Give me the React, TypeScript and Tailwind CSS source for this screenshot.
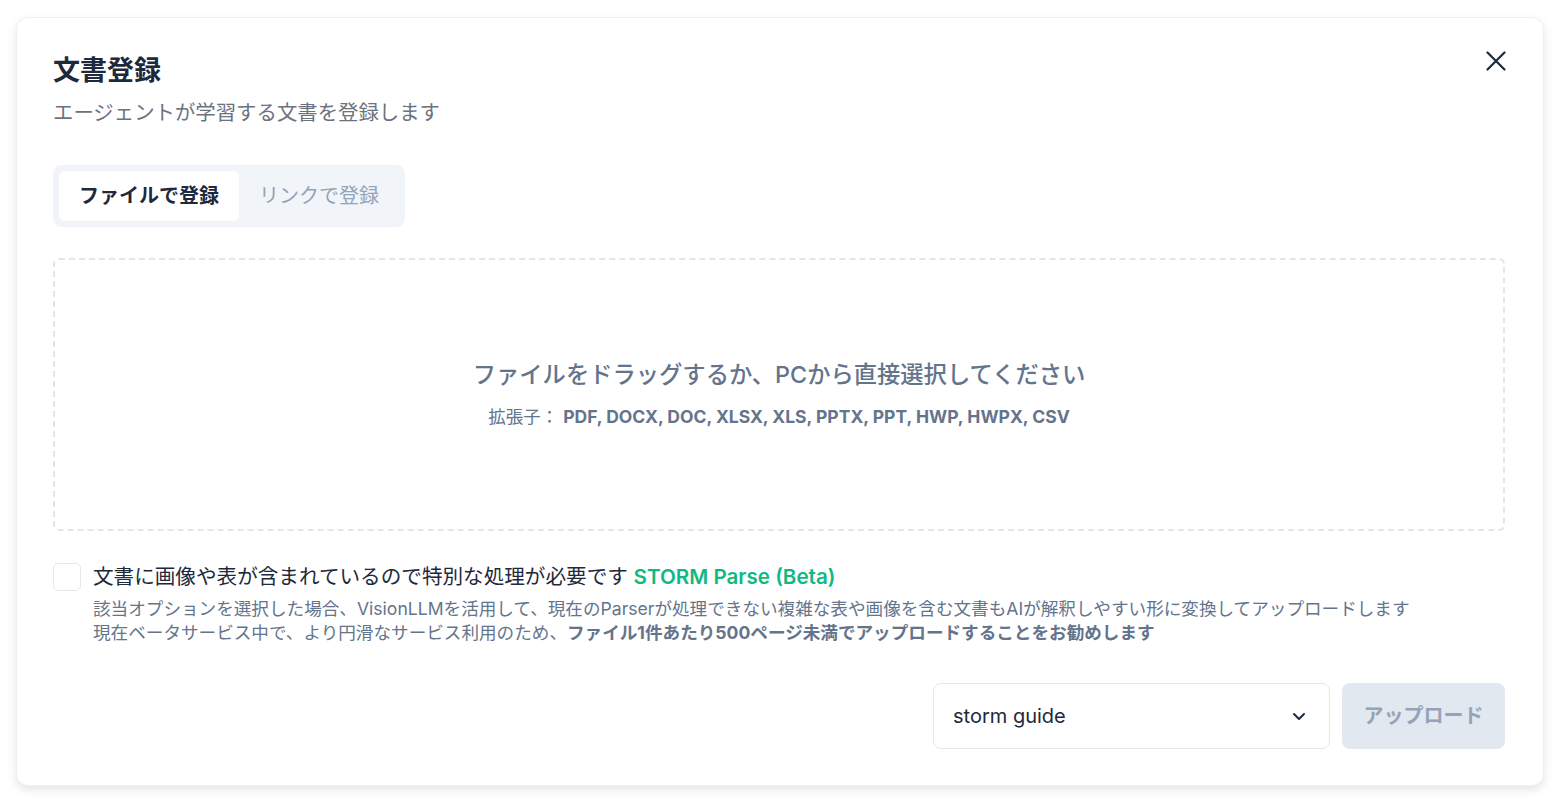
import React from "react";

const font = { fontFamily: "Inter, 'Noto Sans CJK JP', 'Noto Sans', sans-serif" };

export default function App() {
  return (
    <div className="w-[1554px] h-[804px] bg-white pt-[17px] pl-[16px]" style={font}>
      <div className="relative w-[1528px] h-[769px] bg-white rounded-[12px] border border-[#eef0f3] shadow-[0_4px_10px_rgba(0,0,0,0.10)] pl-[36px] pr-[38px] pt-[35px] flex flex-col">
        <button className="absolute right-[37px] top-[32px] w-[21px] h-[21px] flex items-center justify-center text-[#1e293b]">
          <svg width="20" height="20" viewBox="0 0 20 20" fill="none" stroke="currentColor" strokeWidth="2.2" strokeLinecap="round">
            <path d="M1.5 1.5L18.5 18.5M18.5 1.5L1.5 18.5" />
          </svg>
        </button>
        <h1 className="text-[27px] leading-[36px] font-bold text-[#1e293b]">文書登録</h1>
        <p className="mt-[10px] text-[20.4px] leading-[28px] text-[#6b7280]">エージェントが学習する文書を登録します</p>

        <div className="mt-[38px] self-start flex p-[6px] bg-[#f1f5f9] rounded-[8px] h-[62px]">
          <div className="px-[20px] h-[50px] flex items-center bg-white rounded-[6px] text-[20px] font-bold text-[#1e293b]">ファイルで登録</div>
          <div className="px-[20px] h-[50px] flex items-center text-[20px] text-[#94a3b8]">リンクで登録</div>
        </div>

        <div className="mt-[31px] h-[273px] border-2 border-dashed border-[#e2e5f0] rounded-[6px] flex flex-col items-center justify-center">
          <div className="text-[23.3px] leading-[32px] font-medium text-[#64748b]">ファイルをドラッグするか、PCから直接選択してください</div>
          <div className="mt-[13px] text-[17.5px] leading-[26px] text-[#64748b]">
            拡張子： <span className="font-bold">PDF, DOCX, DOC, XLSX, XLS, PPTX, PPT, HWP, HWPX, CSV</span>
          </div>
        </div>

        <div className="mt-[32px] flex items-start">
          <div className="w-[28px] h-[28px] border border-[#e5e7eb] rounded-[5px] bg-white shrink-0" />
          <div className="ml-[12px]">
            <div className="text-[20.6px] leading-[28px] text-[#1e293b]">
              文書に画像や表が含まれているので特別な処理が必要です <span className="font-semibold text-[#10b981]">STORM Parse (Beta)</span>
            </div>
            <div className="mt-[6px] text-[17.6px] leading-[24px] text-[#64748b]">
              <div>該当オプションを選択した場合、VisionLLMを活用して、現在のParserが処理できない複雑な表や画像を含む文書もAIが解釈しやすい形に変換してアップロードします</div>
              <div>現在ベータサービス中で、より円滑なサービス利用のため、<span className="font-bold">ファイル1件あたり500ページ未満でアップロードすることをお勧めします</span></div>
            </div>
          </div>
        </div>

        <div className="mt-auto mb-[36px] flex justify-end gap-[12px]">
          <div className="w-[397px] h-[66px] border border-[#e5e7eb] rounded-[8px] flex items-center justify-between pl-[19px] pr-[22px] text-[20px] text-[#1e293b]">
            <span>storm guide</span>
            <svg width="16" height="16" viewBox="0 0 16 16" fill="none" stroke="currentColor" strokeWidth="2" strokeLinecap="round" strokeLinejoin="round">
              <path d="M3 6l5 5 5-5" />
            </svg>
          </div>
          <button className="w-[163px] h-[66px] rounded-[8px] bg-[#e2e8f0] text-[20px] font-bold text-[#94a3b8]">アップロード</button>
        </div>
      </div>
    </div>
  );
}
